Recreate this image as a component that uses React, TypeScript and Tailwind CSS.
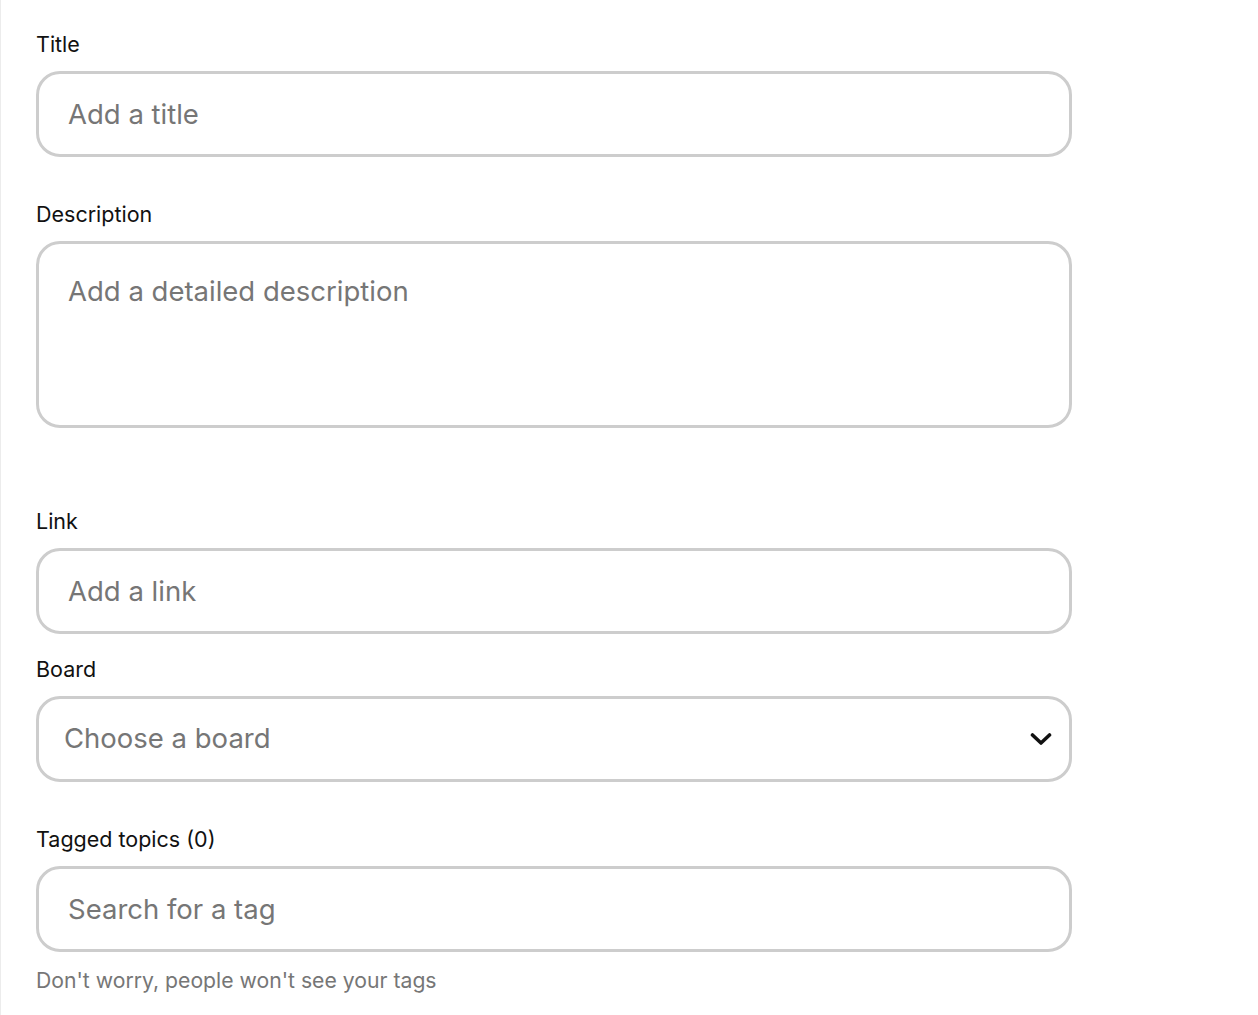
import { useState } from "react";

const inputClass =
  "block h-[86px] w-[1036px] rounded-[24px] border-[3px] border-[#cdcdcd] bg-white px-[29px] text-[27.5px] text-[#111111] outline-none placeholder:text-[#767676]";

function FieldLabel({ children, htmlFor }: { children: React.ReactNode; htmlFor?: string }) {
  return (
    <label htmlFor={htmlFor} className="mb-[13px] block h-[28px] text-[21.5px] leading-[28px] text-[#111111]">
      {children}
    </label>
  );
}

export default function App() {
  const [title, setTitle] = useState("");
  const [description, setDescription] = useState("");
  const [link, setLink] = useState("");
  const [tag, setTag] = useState("");

  return (
    <div
      className="min-h-[1015px] w-full border-l border-[#ececec] bg-white pl-[35px] pt-[30px]"
      style={{ fontFamily: 'Inter, "Noto Sans", Arial, sans-serif' }}
    >
      <div>
        <FieldLabel htmlFor="title">Title</FieldLabel>
        <input
          id="title"
          value={title}
          onChange={(event) => setTitle(event.target.value)}
          placeholder="Add a title"
          className={inputClass}
        />
      </div>

      <div className="mt-[43px]">
        <FieldLabel htmlFor="description">Description</FieldLabel>
        <textarea
          id="description"
          value={description}
          onChange={(event) => setDescription(event.target.value)}
          placeholder="Add a detailed description"
          className="block h-[187px] w-[1036px] resize-none rounded-[24px] border-[3px] border-[#cdcdcd] bg-white px-[29px] pt-[30px] text-[27.5px] leading-[34px] text-[#111111] outline-none placeholder:text-[#767676]"
        />
      </div>

      <div className="mt-[79px]">
        <FieldLabel htmlFor="link">Link</FieldLabel>
        <input
          id="link"
          value={link}
          onChange={(event) => setLink(event.target.value)}
          placeholder="Add a link"
          className={inputClass}
        />
      </div>

      <div className="mt-[21px]">
        <FieldLabel>Board</FieldLabel>
        <button
          type="button"
          className="flex h-[86px] w-[1036px] items-center justify-between rounded-[24px] border-[3px] border-[#cdcdcd] bg-white pl-[25px] pr-[17px] text-left"
        >
          <span className="text-[27.5px] text-[#767676]">Choose a board</span>
          <svg width="22" height="14" viewBox="0 0 22 14" fill="none" aria-hidden="true">
            <path d="M2.5 3L11 11L19.5 3" stroke="#111111" strokeWidth="3.6" strokeLinecap="round" strokeLinejoin="round" />
          </svg>
        </button>
      </div>

      <div className="mt-[43px]">
        <FieldLabel htmlFor="tags">Tagged topics (0)</FieldLabel>
        <input
          id="tags"
          value={tag}
          onChange={(event) => setTag(event.target.value)}
          placeholder="Search for a tag"
          className={inputClass}
        />
        <p className="mt-[14px] text-[21.2px] leading-[28px] text-[#767676]">
          Don't worry, people won't see your tags
        </p>
      </div>
    </div>
  );
}
